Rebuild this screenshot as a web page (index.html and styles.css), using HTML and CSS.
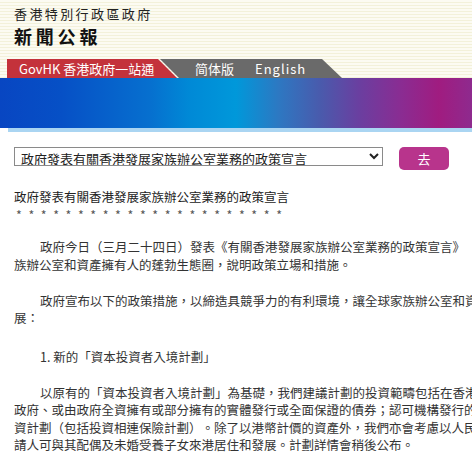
FILE: index.html
```html
<!DOCTYPE html>
<html lang="zh-HK">
<head>
  <meta charset="UTF-8" />
  <meta name="viewport" content="width=device-width, initial-scale=1.0" />
  <title>新聞公報</title>
  <link rel="stylesheet" href="styles.css">
</head>
<body>
  <div class="masthead">
    <div class="gov-name">香港特別行政區政府</div>
    <div class="site-name">新聞公報</div>
    <div class="tabs">
      <a class="tab-gov" href="#">GovHK 香港政府一站通</a>
      <div class="tab-lang">
        <a href="#" class="lang-sc">简体版</a>
        <a href="#" class="lang-en">English</a>
      </div>
    </div>
  </div>
  <div class="banner"></div>
  <div class="banner-line"></div>

  <div class="article">
    <div class="jump">
      <select class="jump-select">
        <option>政府發表有關香港發展家族辦公室業務的政策宣言</option>
      </select>
      <button class="jump-go">去</button>
    </div>

    <div class="headline">政府發表有關香港發展家族辦公室業務的政策宣言</div>
    <div class="stars">* * * * * * * * * * * * * * * * * * * * * *</div>

    <p class="para">政府今日（三月二十四日）發表《有關香港發展家族辦公室業務的政策宣言》（《宣言》），闡述在香港發展家族辦公室和資產擁有人的蓬勃生態圈，說明政策立場和措施。</p>

    <p class="para">政府宣布以下的政策措施，以締造具競爭力的有利環境，讓全球家族辦公室和資產擁有人在港落戶及繼續蓬勃發展：</p>

    <p class="para item">1. 新的「資本投資者入境計劃」</p>

    <p class="para">以原有的「資本投資者入境計劃」為基礎，我們建議計劃的投資範疇包括在香港上市的股票、由香港特別行政區政府、或由政府全資擁有或部分擁有的實體發行或全面保證的債券；認可機構發行的存款證；次級債務；合格集體投資計劃（包括投資相連保險計劃）。除了以港幣計價的資產外，我們亦會考慮以人民幣計價的資產作投資。合資格申請人可與其配偶及未婚受養子女來港居住和發展。計劃詳情會稍後公布。</p>
  </div>
</body>
</html>
```

FILE: styles.css
```css
html, body {
  overflow: hidden;
}
body {
  margin: 0;
  font-family: "Noto Sans CJK TC", "Noto Sans", sans-serif;
  color: #333;
  background: #fff;
}
.masthead {
  height: 78px;
  padding-top: 6px;
  box-sizing: border-box;
  background: repeating-linear-gradient(180deg, #fcfbf2 0, #fcfbf2 2px, #f3f1da 2px, #f3f1da 3px);
}
.gov-name {
  margin-left: 14px;
  font-size: 13px;
  line-height: 15px;
  letter-spacing: 2.4px;
  color: #222;
}
.site-name {
  margin: 4px 0 0 14px;
  font-size: 18px;
  line-height: 22px;
  font-weight: bold;
  letter-spacing: 3.8px;
  color: #111;
}
.tabs {
  display: flex;
  height: 19px;
  margin: 12px 0 0 7px;
}
.tabs a {
  color: #fff;
  text-decoration: none;
  font-size: 13px;
  line-height: 19px;
}
.tab-gov {
  position: relative;
  z-index: 1;
  width: 170px;
  padding-left: 12px;
  box-sizing: border-box;
  background: #c4323b;
  clip-path: polygon(0 0, 151px 0, 170px 100%, 0 100%);
}
.tab-lang {
  display: flex;
  width: 182px;
  margin-left: -17px;
  background: #6a6a6a;
  clip-path: polygon(0 0, 162px 0, 182px 100%, 19px 100%);
}
.lang-sc {
  margin-left: 35px;
}
.lang-en {
  margin-left: 21px;
  letter-spacing: 1px;
}
.banner {
  height: 50px;
  background: linear-gradient(90deg, #0846c2 0%, #0650c6 13%, #0670cf 32%, #0089d6 40%, #0098da 50%, #2d78c2 59%, #4a5aac 68%, #6a3fa0 76%, #8a2c92 85%, #a01c80 93%, #8e2a8e 100%);
}
.banner-line {
  height: 4px;
  margin-left: 8px;
  background: #aad5f2;
}
.article {
  width: 640px;
  padding: 0 14px;
  font-size: 12.5px;
  line-height: 17.5px;
  text-spacing-trim: space-all;
}
.jump {
  display: flex;
  align-items: flex-start;
  gap: 16px;
  margin-top: 15px;
}
.jump-select {
  width: 369px;
  height: 19px;
  padding: 0 2px;
  font-family: inherit;
  font-size: 13px;
  color: #222;
  background: #fff;
  border: 1px solid #8a8a8a;
  border-radius: 0;
}
.jump-go {
  width: 50px;
  height: 23px;
  padding: 0;
  border: none;
  border-radius: 5px;
  background: #b8348c;
  color: #fff;
  font-family: inherit;
  font-size: 13px;
}
.headline {
  margin-top: 18px;
  color: #222;
}
.stars {
  padding-left: 2px;
  color: #555;
  word-spacing: 3.75px;
}
.para {
  margin: 15px 0 0;
  text-indent: 26px;
}
.para + .para {
  margin-top: 18.5px;
}
.para.item {
  margin-top: 21px;
}
```
